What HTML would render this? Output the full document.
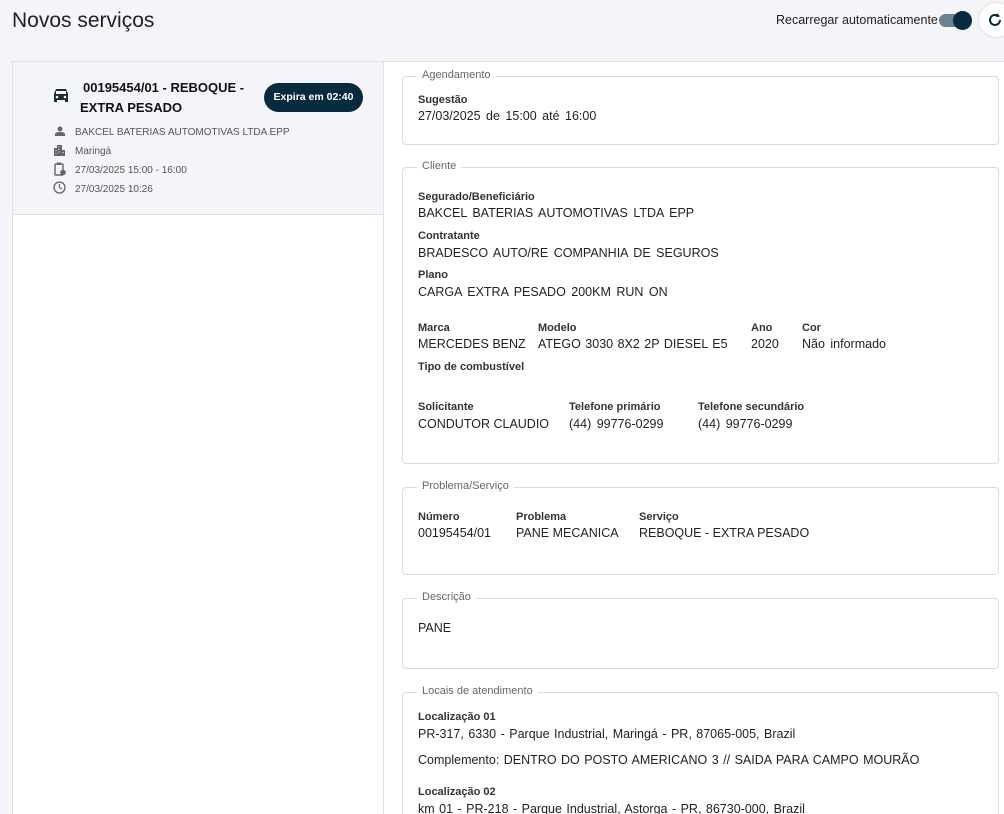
<!DOCTYPE html>
<html><head><meta charset="utf-8"><style>
*{margin:0;padding:0;box-sizing:border-box}
html,body{width:1004px;height:814px;overflow:hidden}
body{background:#f4f5f9;font-family:"Liberation Sans",sans-serif;color:#222;position:relative}
.a{position:absolute;white-space:nowrap}
h1{position:absolute;left:12px;top:9px;font-weight:400;font-size:21px;color:#222}
.left{position:absolute;left:12px;top:61px;width:372px;height:753px;background:#fff;border:1px solid #dde1ea;border-bottom:none;overflow:hidden}
.card{position:absolute;left:0;top:0;width:370px;height:153px;background:#f4f5f9;border-bottom:1px solid #dde1ea}
.right{position:absolute;left:384px;top:61px;width:620px;height:753px;background:#fff;border-top:1px solid #dde1ea;overflow:hidden}
.fs{position:absolute;left:18px;width:597px;border:1px solid #dcdcdc;border-radius:4px}
.lg{position:absolute;top:-8px;left:14px;background:#fff;padding:0 5px;font-size:11px;color:#666}
.l{font-size:11px;font-weight:bold;color:#333}
.v{font-size:12.5px;color:#222;word-spacing:2px}
.meta{font-size:10px;color:#555}
</style></head><body>
<h1>Novos serviços</h1>
<div class="a" style="left:776px;top:13px;font-size:12.5px;color:#222">Recarregar automaticamente</div>
<div class="a" style="left:939px;top:14px;width:30px;height:13px;border-radius:7px;background:#6e8190"></div>
<div class="a" style="left:953px;top:11px;width:19px;height:19px;border-radius:50%;background:#062a3e"></div>
<div class="a" style="left:978px;top:2px;width:36px;height:36px;border-radius:50%;background:#fff;border:1px solid #e0e0e0"></div>
<svg class="a" style="left:987px;top:12px" width="16" height="16" viewBox="0 0 16 16"><path d="M13 8a5 5 0 1 1-1.6-3.7" fill="none" stroke="#062a3e" stroke-width="2"/><path d="M10 1l3 3.5-4 .8z" fill="#062a3e"/></svg>
<div class="left"><div class="card">
<svg class="a" style="left:38px;top:24px" width="20" height="18" viewBox="0 0 20 18"><path d="M3 8l2-5h10l2 5v8h-3v-2H6v2H3z" fill="#1c2b36"/><rect x="5" y="5" width="10" height="3" fill="#f4f5f9"/><circle cx="6" cy="11" r="1.3" fill="#f4f5f9"/><circle cx="14" cy="11" r="1.3" fill="#f4f5f9"/></svg>
<div class="a" style="left:70px;top:18px;font-size:13px;font-weight:bold;color:#111">00195454/01 - REBOQUE -</div>
<div class="a" style="left:67px;top:38px;font-size:13px;font-weight:bold;color:#111">EXTRA PESADO</div>
<div class="a" style="left:251px;top:21px;width:99px;height:29px;border-radius:15px;background:#062a3e;color:#fff;font-size:10.5px;font-weight:bold;text-align:center;line-height:29px">Expira em 02:40</div>
<svg class="a" style="left:42px;top:64px" width="10" height="10" viewBox="0 0 10 10"><circle cx="5" cy="3" r="2.5" fill="#666"/><path d="M0 10v-2q0-2 5-2t5 2v2z" fill="#666"/></svg>
<div class="a meta" style="left:62px;top:65px">BAKCEL BATERIAS AUTOMOTIVAS LTDA EPP</div>
<svg class="a" style="left:41px;top:83px" width="11" height="11" viewBox="0 0 11 11"><path d="M0 11V3h3V0h5v5h3v6z" fill="#666"/><path d="M1.5 5h1v1h-1zM4.5 1.5h1v1h-1zM4.5 4h1v1h-1zM4.5 6.5h1v1h-1zM8.5 7h1v1h-1zM1.5 8h1v1h-1z" fill="#fff"/></svg>
<div class="a meta" style="left:62px;top:84px">Maringá</div>
<svg class="a" style="left:41px;top:100px" width="12" height="14" viewBox="0 0 12 14"><rect x="1" y="2" width="8" height="11" rx="1" fill="none" stroke="#666" stroke-width="1.4"/><rect x="3" y="0.5" width="4" height="2.5" fill="#666"/><circle cx="9" cy="10.5" r="2.8" fill="#666"/></svg>
<div class="a meta" style="left:62px;top:103px">27/03/2025 15:00 - 16:00</div>
<svg class="a" style="left:40px;top:119px" width="13" height="13" viewBox="0 0 13 13"><circle cx="6.5" cy="6.5" r="5.5" fill="none" stroke="#666" stroke-width="1.3"/><path d="M6.5 3v3.5l2.5 1.5" fill="none" stroke="#666" stroke-width="1.2"/></svg>
<div class="a meta" style="left:62px;top:122px">27/03/2025 10:26</div>
</div></div>
<div class="right">
<div class="fs" style="top:14px;height:69px"><div class="lg">Agendamento</div>
<div class="a l" style="left:15px;top:17px">Sugestão</div><div class="a v" style="left:15px;top:32px">27/03/2025 de 15:00 até 16:00</div></div>
<div class="fs" style="top:105px;height:297px"><div class="lg">Cliente</div>
<div class="a l" style="left:15px;top:23px">Segurado/Beneficiário</div><div class="a v" style="left:15px;top:38px">BAKCEL BATERIAS AUTOMOTIVAS LTDA EPP</div>
<div class="a l" style="left:15px;top:62px">Contratante</div><div class="a v" style="left:15px;top:78px">BRADESCO AUTO/RE COMPANHIA DE SEGUROS</div>
<div class="a l" style="left:15px;top:101px">Plano</div><div class="a v" style="left:15px;top:117px">CARGA EXTRA PESADO 200KM RUN ON</div>
<div class="a l" style="left:15px;top:154px">Marca</div><div class="a v" style="left:15px;top:169px;word-spacing:0">MERCEDES BENZ</div>
<div class="a l" style="left:135px;top:154px">Modelo</div><div class="a v" style="left:135px;top:169px;word-spacing:1px">ATEGO 3030 8X2 2P DIESEL E5</div>
<div class="a l" style="left:348px;top:154px">Ano</div><div class="a v" style="left:348px;top:169px">2020</div>
<div class="a l" style="left:399px;top:154px">Cor</div><div class="a v" style="left:399px;top:169px">Não informado</div>
<div class="a l" style="left:15px;top:193px">Tipo de combustível</div>
<div class="a l" style="left:15px;top:233px">Solicitante</div><div class="a v" style="left:15px;top:249px;word-spacing:0">CONDUTOR CLAUDIO</div>
<div class="a l" style="left:166px;top:233px">Telefone primário</div><div class="a v" style="left:166px;top:249px">(44) 99776-0299</div>
<div class="a l" style="left:295px;top:233px">Telefone secundário</div><div class="a v" style="left:295px;top:249px">(44) 99776-0299</div></div>
<div class="fs" style="top:425px;height:88px"><div class="lg">Problema/Serviço</div>
<div class="a l" style="left:15px;top:23px">Número</div><div class="a v" style="left:15px;top:38px">00195454/01</div>
<div class="a l" style="left:113px;top:23px">Problema</div><div class="a v" style="left:113px;top:38px;word-spacing:0">PANE MECANICA</div>
<div class="a l" style="left:236px;top:23px">Serviço</div><div class="a v" style="left:236px;top:38px;word-spacing:0">REBOQUE - EXTRA PESADO</div></div>
<div class="fs" style="top:536px;height:71px"><div class="lg">Descrição</div>
<div class="a v" style="left:15px;top:22px">PANE</div></div>
<div class="fs" style="top:630px;height:200px"><div class="lg">Locais de atendimento</div>
<div class="a l" style="left:15px;top:18px">Localização 01</div><div class="a v" style="left:15px;top:34px;word-spacing:1px">PR-317, 6330 - Parque Industrial, Maringá - PR, 87065-005, Brazil</div>
<div class="a v" style="left:15px;top:60px;word-spacing:1px">Complemento: DENTRO DO POSTO AMERICANO 3 // SAIDA PARA CAMPO MOURÃO</div>
<div class="a l" style="left:15px;top:93px">Localização 02</div><div class="a v" style="left:15px;top:109px;word-spacing:1px">km 01 - PR-218 - Parque Industrial, Astorga - PR, 86730-000, Brazil</div></div>
</div>
</body></html>
